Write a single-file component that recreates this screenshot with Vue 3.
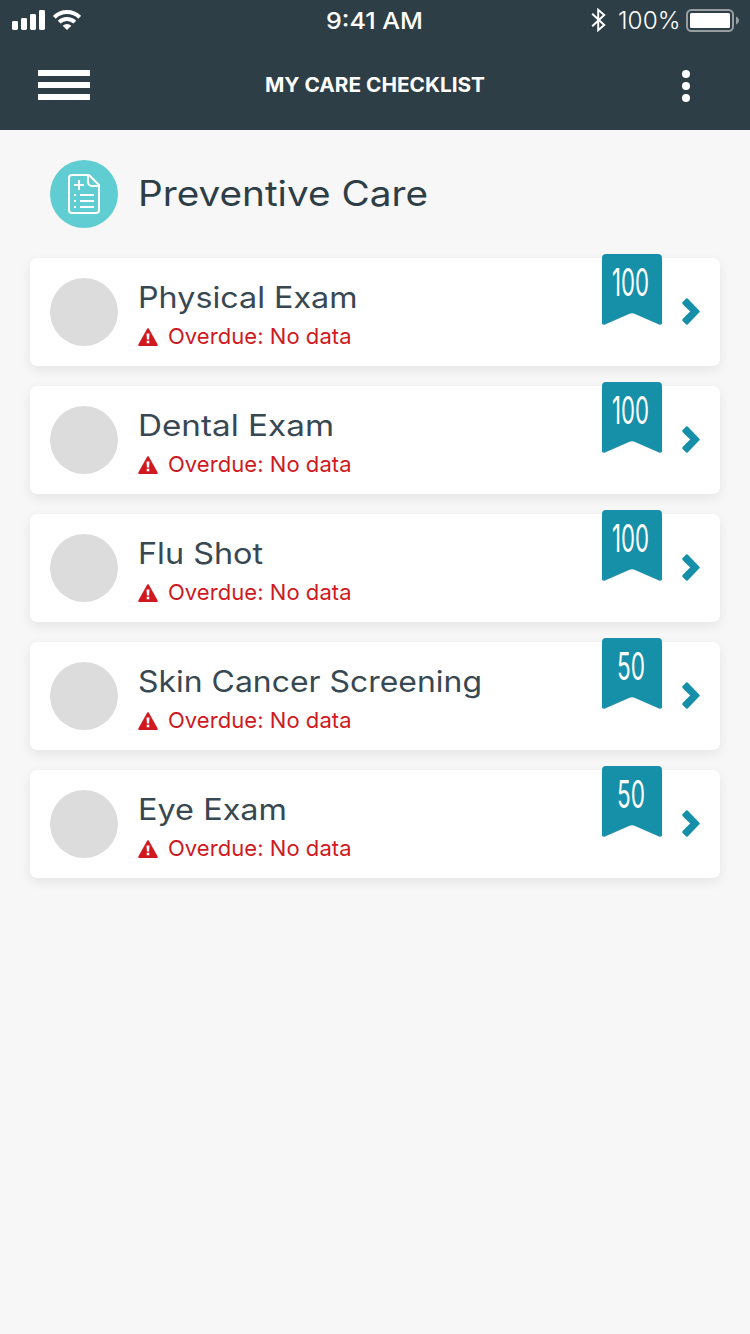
<script setup>
const items = [
  { title: 'Physical Exam', width: 219.5, points: '100' },
  { title: 'Dental Exam', width: 196, points: '100' },
  { title: 'Flu Shot', width: 125, points: '100' },
  { title: 'Skin Cancer Screening', width: 344, points: '50' },
  { title: 'Eye Exam', width: 149, points: '50' },
]
</script>

<template>
  <div class="screen">
    <header class="header">
      <div class="status">
        <div class="side">
          <svg width="34" height="20" viewBox="0 0 34 20" fill="#fff">
            <rect x="0" y="11" width="6" height="9" rx="1.4" />
            <rect x="9" y="8" width="6" height="12" rx="1.4" />
            <rect x="18" y="4" width="6" height="16" rx="1.4" />
            <rect x="27" y="0" width="6" height="20" rx="1.4" />
          </svg>
          <svg class="wifi" width="28" height="20" viewBox="0 0 28 20">
            <g fill="none" stroke="#fff" stroke-width="4">
              <path d="M1.3 7.3a18 18 0 0 1 25.4 0" />
              <path d="M6.2 12.2a11.1 11.1 0 0 1 15.6 0" />
            </g>
            <path d="M14 20l-4.3-4.3a6.1 6.1 0 0 1 8.6 0z" fill="#fff" />
          </svg>
        </div>
        <svg class="label" width="98" height="40">
          <text class="clock" x="0" y="29" textLength="97" lengthAdjust="spacingAndGlyphs">9:41 AM</text>
        </svg>
        <div class="side right">
          <svg width="16" height="24" viewBox="0 0 16 24" fill="none" stroke="#fff" stroke-width="2">
            <path d="M1.2 5.8l12 11.2-6 5.2V1.8l6 5.2-12 11.2" />
          </svg>
          <svg class="label percent" width="62" height="40">
            <text class="battery-text" x="0" y="29" textLength="62.5" lengthAdjust="spacingAndGlyphs">100%</text>
          </svg>
          <svg class="battery" width="54" height="24" viewBox="0 0 54 24">
            <rect x="1" y="1" width="46" height="21" rx="4.5" fill="none" stroke="#969ea2" stroke-width="2" />
            <rect x="4" y="4" width="40" height="15" rx="1.5" fill="#fff" />
            <path d="M50 7.5c4 1.5 4 6.500 0 8z" fill="#969ea2" />
          </svg>
        </div>
      </div>
      <nav class="nav">
        <div class="menu"><i></i><i></i><i></i></div>
        <svg class="label" width="220" height="40">
          <text class="nav-title" x="0" y="27" textLength="220" lengthAdjust="spacingAndGlyphs">MY CARE CHECKLIST</text>
        </svg>
        <div class="more"><i></i><i></i><i></i></div>
      </nav>
    </header>

    <main>
      <div class="heading">
        <div class="badge">
          <svg width="34" height="42" viewBox="0 0 34 42" fill="none" stroke="#fff" stroke-width="2">
            <path d="M22 2H5a3 3 0 0 0-3 3v32a3 3 0 0 0 3 3h24a3 3 0 0 0 3-3V12z" />
            <path d="M21 2v7a4 4 0 0 0 4 4h7M7 12h10M12 7v10M13 22h14M13 28h14M13 34h14M7 22h2M7 28h2M7 34h2" />
          </svg>
        </div>
        <svg class="label" width="292" height="68">
          <text class="heading-text" x="0" y="46" textLength="290" lengthAdjust="spacingAndGlyphs">Preventive Care</text>
        </svg>
      </div>

      <div v-for="item in items" :key="item.title" class="card">
        <div class="avatar"></div>
        <div class="info">
          <svg class="label" width="350" height="40">
            <text class="title" x="0" y="30" :textLength="item.width" lengthAdjust="spacingAndGlyphs">{{ item.title }}</text>
          </svg>
          <div class="alert">
            <svg width="20" height="18" viewBox="0 0 20 18">
              <path d="M10 1.200L18.800 17H1.200z" fill="#d0191f" stroke="#d0191f" stroke-width="2" stroke-linejoin="round" />
              <path d="M8.500 5.500h3l-.4 6H8.900zM8.700 12.700h2.600v2.500H8.700z" fill="#fff" />
            </svg>
            <svg class="label" width="184" height="30">
              <text class="overdue" x="0" y="22" textLength="183.500" lengthAdjust="spacing">Overdue: No data</text>
            </svg>
          </div>
        </div>
        <svg class="ribbon" width="60" height="71" viewBox="0 0 60 71">
          <path d="M0 4a4 4 0 0 1 4-4h52a4 4 0 0 1 4 4v65q0 2.500-3 1.500L33 60q-3-1.400-6 0L3 70.500q-3 1-3-1.500z" fill="#168fa9" />
          <text class="points" :x="item.points === '100' ? 10 : 15" y="42" :textLength="item.points === '100' ? 37 : 28" lengthAdjust="spacingAndGlyphs">{{ item.points }}</text>
        </svg>
        <svg class="chevron" width="20" height="30" viewBox="0 0 20 30">
          <path d="M6 2.500L17.500 14.500 6 26.500 2.500 23 11 14.500 2.500 6z" fill="#168fa9" stroke="#168fa9" stroke-width="2.500" stroke-linejoin="round" />
        </svg>
      </div>
    </main>
  </div>
</template>

<style scoped>
.screen {
  height: 1334px;
  background: #f7f7f7;
  overflow: hidden;
  font-family: Inter, "Liberation Sans", sans-serif;
}
svg { display: block; flex: none; }
.label { overflow: visible; }
.header {
  box-sizing: border-box;
  height: 130px;
  background: #2e3e47;
  border-bottom: 1px solid #2d3b47;
}
.status {
  display: flex;
  align-items: center;
  height: 40px;
  padding: 0 10px 0 12px;
}
.side { display: flex; align-items: center; width: 314px; }
.right { flex: 1; justify-content: flex-end; }
.wifi { margin-left: 7px; }
.percent { margin-left: 11px; }
.battery { margin: 1px 0 0 6px; }
.clock { font-size: 23.5px; font-weight: 500; fill: #fff; }
.battery-text { font-size: 24px; font-weight: 350; fill: #fff; }
.nav {
  display: flex;
  padding: 25px 0 0 38px;
}
.menu { display: flex; flex-direction: column; gap: 6px; width: 227px; padding-top: 5px; }
.menu i { width: 52px; height: 6px; background: #fff; }
.nav-title { font-size: 19.5px; font-weight: 700; fill: #fff; }
.more { display: flex; flex-direction: column; gap: 4px; padding: 5px 0 0 197px; }
.more i { width: 8px; height: 8px; border-radius: 50%; background: #fff; }
main { padding: 30px 30px 0; }
.heading { display: flex; gap: 20px; padding-left: 20px; margin-bottom: 30px; }
.badge {
  display: flex;
  align-items: center;
  justify-content: center;
  width: 68px;
  height: 68px;
  border-radius: 50%;
  background: #60cdd3;
}
.heading-text { font-size: 35px; font-weight: 430; fill: #2e3e47; }
.card {
  box-sizing: border-box;
  display: flex;
  height: 108px;
  margin-bottom: 20px;
  padding: 20px;
  border-radius: 7px;
  background: #fff;
  box-shadow: 0 4px 12px rgba(0, 0, 0, 0.08);
}
.avatar { width: 68px; height: 68px; border-radius: 50%; background: #dcdcdc; }
.info { flex: 1; margin-left: 20px; }
.title { font-size: 29.5px; font-weight: 430; fill: #384852; }
.alert { display: flex; align-items: center; gap: 10px; height: 38px; }
.alert .label { margin-top: -1px; }
.overdue { font-size: 22px; fill: #d0191f; }
.ribbon { margin-top: -24px; overflow: visible; }
.points { font-size: 38.5px; font-weight: 430; fill: #fff; }
.chevron { margin: 19px -1px 0 19px; }
</style>
